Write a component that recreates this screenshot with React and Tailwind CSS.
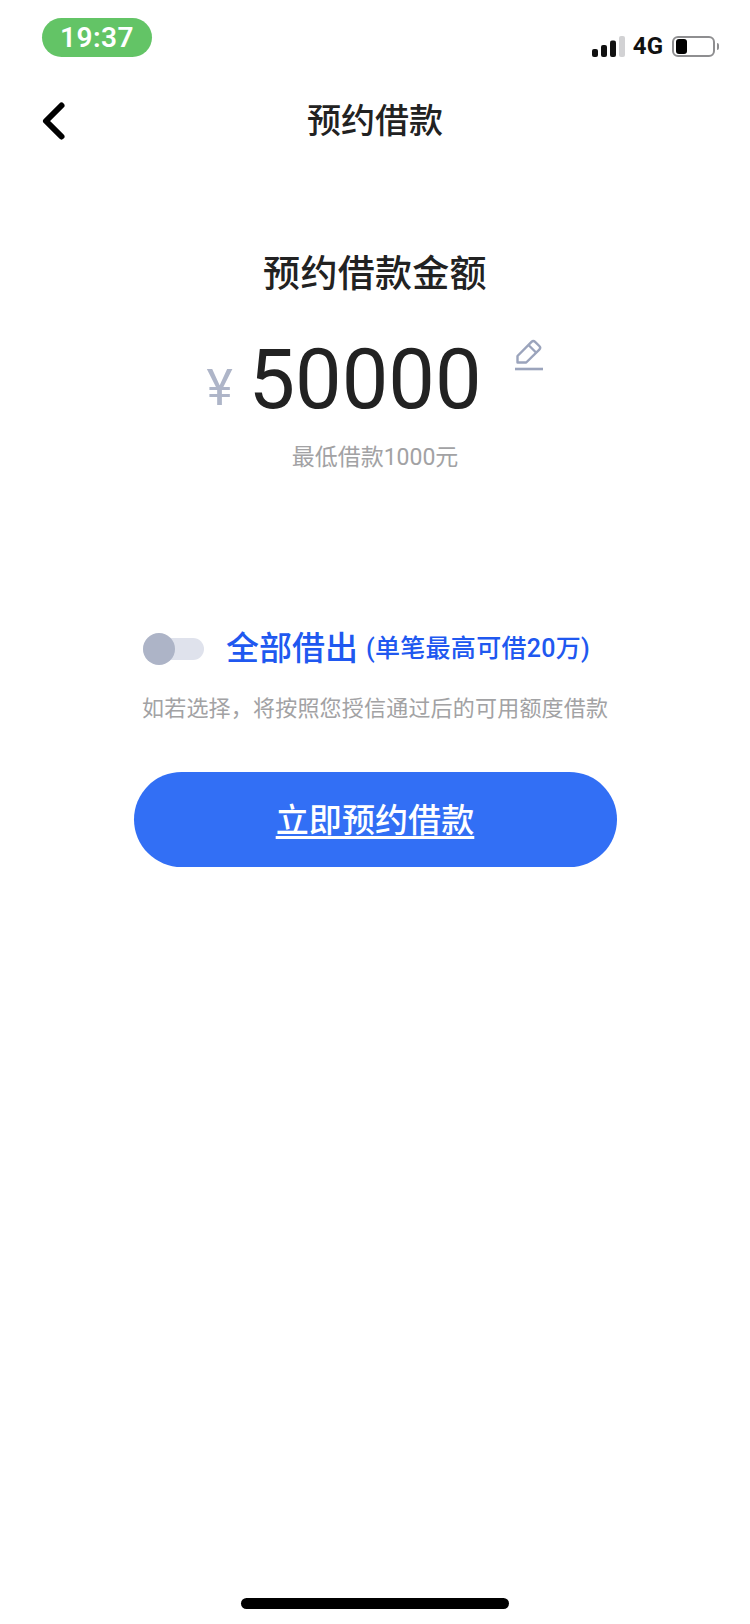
const cjk = "font-['Roboto','Noto_Sans_CJK_SC',sans-serif]";

function StatusBar() {
  return (
    <div className="flex h-[80px] items-start justify-between pl-[42px] pr-[31px] pt-[18px]">
      <div className="flex h-[39px] w-[110px] items-center justify-center rounded-full bg-[#63c466] text-[28px] font-semibold tracking-[0.5px] text-white">
        19:37
      </div>
      <div className="mt-[16px] flex items-center">
        <svg width="33" height="21" viewBox="0 0 33 21">
          <rect x="0" y="13" width="6" height="8" rx="2" fill="#111" />
          <rect x="9" y="9" width="6" height="12" rx="2" fill="#111" />
          <rect x="18" y="4.5" width="6" height="16.5" rx="2" fill="#111" />
          <rect x="27" y="0" width="6" height="21" rx="2" fill="#d2d2d4" />
        </svg>
        <span className="ml-[8px] text-[24px] font-bold leading-none text-[#111]">4G</span>
        <div className="ml-[9px] flex h-[21px] w-[43px] items-center rounded-[6px] border-2 border-[#8e8e90] pl-[2px]">
          <div className="h-[15px] w-[11px] rounded-[3px] bg-black" />
        </div>
        <div className="ml-[2px] h-[7px] w-[2px] rounded-r-full bg-[#8e8e90]" />
      </div>
    </div>
  );
}

function NavBar() {
  return (
    <div className="grid h-[80px] grid-cols-[1fr_auto_1fr] items-center pl-[41px]">
      <svg width="26" height="40" viewBox="0 0 26 40" fill="none" className="mt-[1px]">
        <path d="M20.5 4.5 L5 20 L20.5 35.5" stroke="#000" strokeWidth="6" strokeLinecap="round" strokeLinejoin="round" />
      </svg>
      <h1 className="mr-[41px] mt-[2px] text-[34px] font-medium leading-[48px] text-[#222]">预约借款</h1>
      <div />
    </div>
  );
}

function Amount() {
  return (
    <div className="mt-[30px] flex h-[100px] justify-center">
      <span className="ml-[1px] mt-[29px] w-[42px] text-[50px] leading-[60px] text-[#aeb5c8]">¥</span>
      <span className="mt-[1px] text-[83px] leading-[100px] text-[#222]">50000</span>
      <svg width="28" height="32" viewBox="0 0 28 32" fill="none" className="ml-[33px] mr-[2px] mt-[10px]" stroke="#9ba4bc" strokeWidth="2.4">
        <path d="M2.5 23.5 L2.5 17 L16.5 2.8 C17.6 1.7 19 1.7 20.1 2.8 L24.3 7 C25.4 8.1 25.4 9.5 24.3 10.6 L11.2 23.5 Z" strokeLinejoin="round" />
        <path d="M13.5 6 L21.5 14" />
        <path d="M0 30 L28 30" strokeWidth="2.6" />
      </svg>
    </div>
  );
}

function Toggle() {
  return (
    <div className="relative flex h-[32px] w-[61px] items-center">
      <div className="h-[22px] w-full rounded-full bg-[#dfe2ec]" />
      <div className="absolute left-0 top-0 h-[32px] w-[32px] rounded-full bg-[#adb4c7]" />
    </div>
  );
}

export default function App() {
  return (
    <div className={`flex h-[1624px] w-[750px] flex-col bg-white ${cjk}`}>
      <StatusBar />
      <NavBar />
      <h2 className="mt-[91px] text-center text-[37px] font-medium leading-[48px] tracking-[0.3px] text-[#222]">预约借款金额</h2>
      <Amount />
      <p className="mt-[13px] text-center text-[23px] leading-[32px] text-[#a2a2a4]">最低借款1000元</p>
      <div className="ml-[143px] mt-[155px] flex h-[40px] items-center text-[#2058f0]">
        <Toggle />
        <span className="ml-[22px] text-[33px] font-medium leading-[40px]">全部借出</span>
        <span className="ml-[8px] text-[25px] font-medium leading-[40px] tracking-[0.3px]">(单笔最高可借20万)</span>
      </div>
      <p className="ml-[142px] mt-[24px] text-[22px] leading-[32px] tracking-[0.2px] text-[#a2a2a4]">如若选择，将按照您授信通过后的可用额度借款</p>
      <button className="mx-auto mt-[47px] flex h-[95px] w-[483px] items-center justify-center rounded-full bg-[#326ff5] pt-[2px] text-[33px] font-medium leading-[48px] tracking-[0.1px] text-white underline decoration-[3px] underline-offset-[4px]">
        立即预约借款
      </button>
      <div className="mx-auto mb-[15px] mt-auto h-[11px] w-[268px] rounded-full bg-black" />
    </div>
  );
}
